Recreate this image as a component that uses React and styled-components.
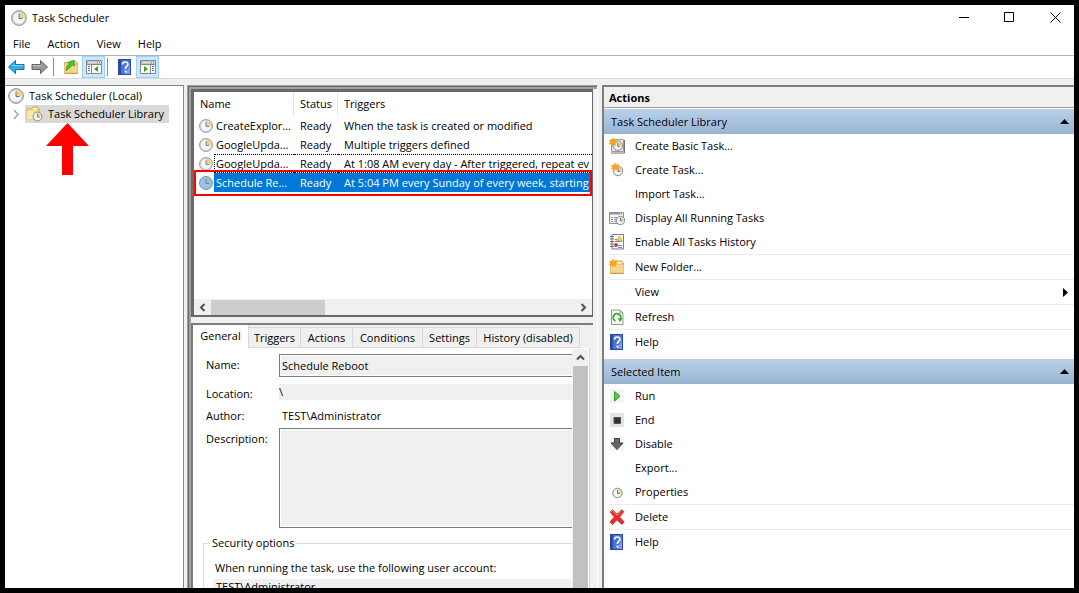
import React from 'react';
import styled, { createGlobalStyle, css } from 'styled-components';

const GlobalStyle = createGlobalStyle`
  *, *::before, *::after {
    box-sizing: border-box;
  }

  body {
    margin: 0;
    background: #000;
    color: #000;
    font: 11px/16px "Open Sans", "Noto Sans", sans-serif;
  }

  button, input, textarea {
    margin: 0;
    padding: 0;
    border: 0;
    border-radius: 0;
    background: none;
    color: inherit;
    font: inherit;
    text-align: left;
  }
`;

const Window = styled.div`
  display: flex;
  flex-direction: column;
  height: 100vh;
  border: 5px solid #000;
  background: #fff;
  overflow: hidden;
`;

const TitleBar = styled.header`
  display: flex;
  align-items: center;
  flex: 0 0 auto;
  height: 25px;
  padding-left: 6px;
`;

const Title = styled.h1`
  flex: 1;
  margin: 0 0 0 5px;
  font-size: 11px;
  font-weight: normal;
`;

const WindowButton = styled.button`
  display: flex;
  align-items: center;
  justify-content: center;
  width: 45px;
  height: 25px;

  &:last-child {
    width: 42px;
    padding-left: 4px;
  }
`;

const MenuBar = styled.nav`
  display: flex;
  flex: 0 0 auto;
  gap: 17px;
  height: 26px;
  padding: 2px 8px 0;
  border-bottom: 1px solid #b4b4b4;
`;

const ToolBar = styled.div`
  display: flex;
  align-items: center;
  flex: 0 0 auto;
  height: 23px;
  border-bottom: 1px solid #dadada;
`;

const ToolButton = styled.button`
  display: flex;
  align-items: center;
  justify-content: center;
  width: 23px;
  height: 22px;
  border: 1px solid ${props => props.$pressed ? '#99d1ff' : 'transparent'};
  background-color: ${props => props.$pressed ? '#cce8ff' : 'transparent'};
`;

const ToolSeparator = styled.span`
  width: 1px;
  height: 18px;
  margin: 0 5px 0 2px;
  background-color: #8c8c8c;
`;

const Body = styled.main`
  display: grid;
  grid-template-columns: 182px minmax(0, 411fr) minmax(0, 476fr);
  flex: 1;
  min-height: 0;
  padding-top: 6px;
  background-color: #f0f0f0;
`;

const TreePane = styled.aside`
  position: relative;
  margin-right: 3px;
  border-top: 1px solid #828790;
  border-right: 1px solid #828790;
  background-color: #fff;
`;

const TreeRow = styled.div`
  display: flex;
  align-items: center;
  height: 18px;
  padding-left: ${props => props.$child ? '6px' : '3px'};

  &:first-child {
    margin-top: 1px;
  }
`;

const TreeLabel = styled.button`
  display: flex;
  align-items: center;
  gap: 5px;
  height: 18px;
  margin-left: ${props => props.$selected ? '5px' : '0'};
  padding: 0 5px 0 ${props => props.$selected ? '1px' : '0'};
  background-color: ${props => props.$selected ? '#d9d9d9' : 'transparent'};
  white-space: nowrap;
`;

const ArrowMark = styled.svg`
  position: absolute;
  top: 37px;
  left: 41px;
`;

const MiddlePane = styled.section`
  display: flex;
  flex-direction: column;
  min-width: 0;
  min-height: 0;
  padding: 3px 4px 0 3px;
  border: solid #a0a0a0;
  border-width: 1px 0 0 1px;
  border-right: 1px solid #fff;
  box-shadow: inset 1px 1px #696969, inset 3px 3px #a0a0a0;
`;

const ListPane = styled.div`
  position: relative;
  display: flex;
  flex-direction: column;
  flex: 0 0 228px;
  border: solid #696969;
  border-width: 3px 1px 2px 3px;
  background-color: #fff;
  overflow: hidden;
`;

const TaskTable = styled.table`
  width: 100%;
  border-collapse: separate;
  border-spacing: 0;
  table-layout: fixed;
`;

const HeadCell = styled.th`
  height: 24px;
  padding: 0 0 0 6px;
  border-right: ${props => props.$divided ? '1px solid #e5e5e5' : '0'};
  font-weight: normal;
  text-align: left;
`;

const TaskRow = styled.tr`
  height: 19px;
`;

const Cell = styled.td`
  height: 19px;
  padding: 1px 0 0 6px;
  white-space: nowrap;
  overflow: hidden;
  ${props => props.$focused && css`
    border-top: 1px dotted #000;
    border-bottom: 1px dotted #000;
  `}
  ${props => props.$selected && css`
    background-color: #0078d7;
    color: #fff;
  `}
`;

const IconCell = styled.td`
  padding: 0 0 0 5px;

  svg {
    display: block;
  }
`;

const NameCell = styled(Cell)`
  padding-left: ${props => props.$focused ? '1px' : '2px'};
  border-left: ${props => props.$focused ? '1px dotted #000' : '0'};
`;

const RedBox = styled.div`
  position: absolute;
  top: 78px;
  left: 0;
  right: 0;
  height: 26px;
  border: 2px solid #f00;
`;

const HorizontalBar = styled.div`
  display: grid;
  grid-template-columns: 17px 114px 1fr 17px;
  align-items: center;
  height: 16px;
  margin-top: auto;
  background-color: #f0f0f0;
`;

const HorizontalThumb = styled.span`
  height: 15px;
  background-color: #cdcdcd;
`;

const ScrollButton = styled.button`
  display: flex;
  align-items: center;
  justify-content: center;
  height: 16px;
`;

const DetailPane = styled.div`
  display: flex;
  flex-direction: column;
  flex: 1;
  min-height: 0;
  margin-top: 6px;
  border: solid #7d7d7d;
  border-width: 2px 0 0 2px;
  overflow: hidden;
`;

const Tabs = styled.div`
  display: flex;
  align-items: flex-end;
  flex: 0 0 23px;
`;

const Tab = styled.button`
  flex: 0 0 auto;
  width: ${props => props.$width};
  height: ${props => props.$active ? '23px' : '21px'};
  padding-bottom: ${props => props.$active ? '1px' : '0'};
  border: 1px solid #d9d9d9;
  border-width: ${props => props.$active ? '0 1px 0 0' : '1px 1px 1px 0'};
  background-color: ${props => props.$active ? '#fff' : '#f0f0f0'};
  text-align: center;
  white-space: nowrap;
`;

const TabPage = styled.div`
  display: flex;
  flex: 1;
  min-height: 0;
  margin-right: 3px;
  padding-right: 1px;
  border-right: 1px solid #d9d9d9;
  background-color: #fff;
`;

const Form = styled.form`
  flex: 1;
  min-width: 0;
  padding: 6px 0 0 10px;
  overflow: hidden;
`;

const FormRow = styled.div`
  display: grid;
  grid-template-columns: 76px minmax(0, 1fr);
  min-height: ${props => props.$height};

  label {
    padding: ${props => props.$labelTop || '0'} 0 0 3px;
  }
`;

const TextBox = styled.input`
  width: 100%;
  height: 23px;
  padding: 0 2px 1px;
  border: 1px solid #7a7a7a;
  border-right: 0;
  background-color: #f0f0f0;
  box-shadow: inset 1px 1px #fff, inset 0 -1px #fff;
`;

const PlainBox = styled.input`
  width: 100%;
  height: 16px;
  padding-left: ${props => props.$inset ? '3px' : '0'};
  background-color: ${props => props.$white ? '#fff' : '#f0f0f0'};
`;

const TextArea = styled.textarea`
  display: block;
  width: 100%;
  height: 100px;
  border: 1px solid #7a7a7a;
  border-right: 0;
  background-color: #f0f0f0;
  box-shadow: inset 1px 1px #fff, inset 0 -1px #fff;
  resize: none;
`;

const SecurityGroup = styled.fieldset`
  min-width: 0;
  margin: 7px 0 0;
  padding: 9px 0 0 9px;
  border: 1px solid #dcdcdc;
  border-right: 0;

  legend {
    padding: 0 2px;
    margin-left: -3px;
  }

  label {
    display: block;
    padding: 0 0 3px 2px;
    white-space: nowrap;
  }
`;

const VerticalBar = styled.div`
  display: flex;
  flex-direction: column;
  flex: 0 0 16px;
  margin-top: 1px;
  background-color: #f0f0f0;
`;

const VerticalThumb = styled.span`
  flex: 1;
  margin: 1px 0 0 1px;
  background-color: #c1c1c1;
`;

const ActionsPane = styled.aside`
  min-width: 0;
  margin-left: 4px;
  border: solid #7d7d7d;
  border-width: 2px 0 0 2px;
  background-color: #fff;
  overflow: hidden;
`;

const ActionsTitle = styled.h2`
  height: 21px;
  margin: 0 0 1px;
  padding: 3px 5px 0;
  border-bottom: 1px solid #a0a0a0;
  background-color: #f0f0f0;
  font-size: 11px;
  font-weight: bold;
`;

const GroupHeader = styled.button`
  display: flex;
  align-items: center;
  justify-content: space-between;
  width: 100%;
  height: 25px;
  margin-top: ${props => props.$first ? '0' : '5px'};
  padding: 0 5px 0 7px;
  background: linear-gradient(#b9d1ea, #99b4d1);
`;

const ActionList = styled.ul`
  margin: 0;
  padding: 0 0 0 5px;
  list-style: none;
`;

const ActionItem = styled.li`
  border-top: ${props => props.$divided ? '1px solid #ececec' : '0'};
`;

const ActionButton = styled.button`
  display: grid;
  grid-template-columns: 16px 1fr 10px;
  align-items: center;
  gap: 10px;
  width: 100%;
  height: 24px;
  padding-right: 1px;

  span {
    grid-column: 2;
  }
`;

const ClockFace = ({ cx, cy, r, tint }) => (
  <g>
    <circle cx={cx} cy={cy} r={r} fill={tint || '#d3d6d9'} stroke={tint ? '#4d7ea8' : '#868b90'} strokeWidth=".9" />
    <circle cx={cx} cy={cy} r={r * 0.76} fill={tint || '#f4f6f7'} />
    <path d={`M${cx} ${cy}V${cy - r * 0.76}A${r * 0.76} ${r * 0.76} 0 0 1 ${cx + r * 0.76} ${cy}Z`} fill={tint ? '#a5c3b4' : '#f6cf78'} />
    <path d={`M${cx} ${cy - r * 0.6}V${cy + 0.5}H${cx + r * 0.5}`} fill="none" stroke="#5f7894" strokeWidth="1" />
  </g>
);

const ClockIcon = ({ size = 16, tint }) => (
  <svg width={size} height={size} viewBox="0 0 16 16">
    <ClockFace cx={8} cy={8} r={7.4} tint={tint} />
  </svg>
);

const SmallClockIcon = () => (
  <svg width="16" height="16" viewBox="0 0 16 16">
    <ClockFace cx={8.5} cy={9} r={4.8} />
  </svg>
);

const Spark = ({ x = 0, y = 0 }) => (
  <path
    transform={`translate(${x} ${y})`}
    d="M4 0l1 2.300L7.500 1 6.400 3.400 8 4.500 6 5.200l.7 2.300L4.300 6.300 3 8l-.5-2.300L0 6l1.500-2L0 2.200l2.800.1z"
    fill="#f9a11b"
    stroke="#f9a11b"
    strokeWidth=".6"
  />
);

const CreateTaskIcon = () => (
  <svg width="16" height="16" viewBox="0 0 16 16">
    <ClockFace cx={9} cy={9} r={4.8} />
    <Spark x={2} y={1} />
  </svg>
);

const BasicTaskIcon = () => (
  <svg width="16" height="16" viewBox="0 0 16 16">
    <path d="M2.500 1.500h12v12h-12z" fill="#ebe8e5" stroke="#a39b96" />
    <path d="M2 15h13.500V2" fill="none" stroke="#7a716d" />
    <ClockFace cx={8.8} cy={7.8} r={4.8} />
    <Spark />
  </svg>
);

const FolderShape = () => (
  <g>
    <path d="M1.500 3.500h5l1-1.500h5.500v2h1.500v10.500h-13z" fill="#ecc56c" stroke="#cfa146" strokeWidth=".8" />
    <path d="M8 3h4.500v1.500H8z" fill="#fff" />
    <path d="M1.500 6h13v8.500h-13z" fill="#f5d688" />
    <path d="M1.500 14.300h13" stroke="#c4963a" />
  </g>
);

const NewFolderIcon = () => (
  <svg width="16" height="16" viewBox="0 0 16 16">
    <FolderShape />
    <Spark />
  </svg>
);

const FolderUpIcon = () => (
  <svg width="16" height="16" viewBox="0 0 16 16">
    <FolderShape />
    <path d="M3 11.500c0-3.500 1.500-5.500 3.500-6.500L5 3.500l6-2.300.5 5.800L9.800 6C8 7.500 7 9 3 11.500z" fill="#4cc331" stroke="#279316" strokeWidth=".7" />
  </svg>
);

const LibraryIcon = () => (
  <svg width="17" height="16" viewBox="0 0 17 16">
    <path d="M1 2.500h5l1-1.500h5v2h1.500v10.500H1z" fill="#f5d684" stroke="#d2a850" strokeWidth=".8" />
    <path d="M7 2h4v1.500H7z" fill="#fff" />
    <path d="M1 5h7l1 8.500H1z" fill="#fbe8af" />
    <ClockFace cx={11.5} cy={10.5} r={4.5} />
  </svg>
);

const HelpIcon = () => (
  <svg width="16" height="16" viewBox="0 0 16 16">
    <path d="M1 0h13v16H1z" fill="#2b4aa8" />
    <path d="M4 1h9v14H4z" fill="#4a74dc" />
    <path d="M8 15h5V6z" fill="#7c9cf0" />
    <path d="M5.500 5.500C5.700 3.500 6.700 3 8.200 3c3.300 0 3.300 3 1.600 4.300-1 .8-1.400 1.200-1.400 2.700" fill="none" stroke="#fff" strokeWidth="1.7" />
    <path d="M7.500 11.500h2v2h-2z" fill="#fff" />
  </svg>
);

const ArrowIcon = ({ forward }) => (
  <svg width="17" height="16" viewBox="0 0 17 16">
    <path
      d="M.5 8l7-6.500v4h8.500v5H7.500v4z"
      transform={forward ? 'rotate(180 8.5 8)' : undefined}
      fill={forward ? '#999' : '#35aef0'}
      stroke={forward ? '#636363' : '#176fa8'}
      strokeLinejoin="round"
    />
    <path d={forward ? 'M2 6.500h8' : 'M4.500 6.500H15'} stroke={forward ? '#c4c4c4' : '#8ddcff'} />
  </svg>
);

const PaneIcon = ({ right }) => (
  <svg width="16" height="16" viewBox="0 0 16 16">
    <path d="M.5 1.500h15v13H.5z" fill="#fff" stroke="#85888c" />
    <path d="M1 3.500h14" stroke="#85888c" strokeWidth="2" />
    <path d="M2 3.500h9" stroke="#dfe3e8" />
    <path d="M12 3.500h3" stroke="#fff" strokeDasharray="1 1" />
    <path d={right ? 'M10.500 6v8M1 5.500h14' : 'M5.500 6v8M1 5.500h14'} stroke="#85888c" />
    <path d={right ? 'M12 7.500h2M12 9.500h2M12 11.500h2' : 'M2 7.500h2M2 9.500h2M2 11.500h2'} stroke="#4b78b8" />
    <path d={right ? 'M4 7l4 3-4 3z' : 'M12 7l-4 3 4 3z'} fill="#35a51f" />
  </svg>
);

const RunningIcon = () => (
  <svg width="16" height="16" viewBox="0 0 16 16">
    <path d="M.5 2.500h14v11H.5z" fill="#f5f6f8" stroke="#8a8d94" />
    <path d="M1 3.500h13" stroke="#8f96a3" strokeWidth="2" />
    <path d="M2 7.500h2m1 0h3M2 9.500h2m1 0h3M2 11.500h2m1 0h3" stroke="#85909f" />
    <path d="M11 3.500h3" stroke="#fff" strokeDasharray="1 1" />
    <ClockFace cx={11.5} cy={10.5} r={4.2} />
  </svg>
);

const HistoryIcon = () => (
  <svg width="16" height="16" viewBox="0 0 16 16">
    <path d="M3 .5h11.500v14.500H3z" fill="#f8f8fb" stroke="#777e8e" />
    <path d="M1 2.500h4M1 5h4M1 7.500h4M1 10h4M1 12.500h4" stroke="#6c7482" />
    <path d="M6 5.500h2m-2 2h7M9 11.500h4m-4 2h4" stroke="#7289b7" />
    <path d="M10.500 2l3 4.500h-6z" fill="#f7cf25" stroke="#c99e12" strokeWidth=".5" />
    <circle cx="7" cy="11" r="2" fill="#d93a2b" />
  </svg>
);

const RefreshIcon = () => (
  <svg width="16" height="16" viewBox="0 0 16 16">
    <path d="M2.500 1h8.500l3 3v11.500H2.500z" fill="#fafafa" stroke="#969696" />
    <path d="M11 1v3h3" fill="none" stroke="#969696" />
    <path d="M6.500 12A3.800 3.800 0 1 1 11.500 10" fill="none" stroke="#3aae2f" strokeWidth="1.9" />
    <path d="M8.500 9.200h5.200L11 13z" fill="#3aae2f" />
  </svg>
);

const RunIcon = () => (
  <svg width="16" height="16" viewBox="0 0 16 16">
    <path d="M1 1h14v14H1z" fill="#f4f4f4" />
    <path d="M5.500 3.500v9.500l5.500-4.700z" fill="#5bd03d" stroke="#2a9d1b" />
  </svg>
);

const EndIcon = () => (
  <svg width="16" height="16" viewBox="0 0 16 16">
    <path d="M1 1h14v14H1z" fill="#e2e2e2" />
    <path d="M5 5.500h6.500v6H5z" fill="#333" stroke="#555" />
  </svg>
);

const DisableIcon = () => (
  <svg width="16" height="16" viewBox="0 0 16 16">
    <path d="M1 1h14v14H1z" fill="#f4f4f4" />
    <path d="M5.500 2.500h5V7H14l-6 6.500L2 7h3.500z" fill="#666" stroke="#3d3d3d" strokeLinejoin="round" />
  </svg>
);

const DeleteIcon = () => (
  <svg width="16" height="16" viewBox="0 0 16 16">
    <path d="M1 3l2.500-2.300L8 5l4.500-4.300L15 2.500 10.700 8l4.600 5-2.500 2.500L8 11l-4.500 4.500L.8 13l4.400-5z" fill="#e5302a" stroke="#b91d1b" strokeWidth=".6" />
    <path d="M2 3l1.500-1.300L8 6l4.500-4.300" fill="none" stroke="#f38d86" />
  </svg>
);

const Chevron = ({ d, color = '#505050', width = 2 }) => (
  <svg width="9" height="9" viewBox="0 0 9 9">
    <path d={d} fill="none" stroke={color} strokeWidth={width} />
  </svg>
);

const CollapseMark = () => (
  <svg width="9" height="5" viewBox="0 0 9 5"><path d="M0 5l4.500-5L9 5z" /></svg>
);

const tasks = [
  { name: 'CreateExplor...', trigger: 'When the task is created or modified' },
  { name: 'GoogleUpda...', trigger: 'Multiple triggers defined' },
  { name: 'GoogleUpda...', trigger: 'At 1:08 AM every day - After triggered, repeat ev', focused: true },
  { name: 'Schedule Re...', trigger: 'At 5:04 PM every Sunday of every week, starting', selected: true },
];

const tabs = [
  ['General', '56px'],
  ['Triggers', '52px'],
  ['Actions', '52px'],
  ['Conditions', '70px'],
  ['Settings', '54px'],
  ['History (disabled)', '103px'],
];

const libraryActions = [
  { label: 'Create Basic Task...', icon: <BasicTaskIcon /> },
  { label: 'Create Task...', icon: <CreateTaskIcon /> },
  { label: 'Import Task...' },
  { label: 'Display All Running Tasks', icon: <RunningIcon /> },
  { label: 'Enable All Tasks History', icon: <HistoryIcon /> },
  { label: 'New Folder...', icon: <NewFolderIcon />, divided: true },
  { label: 'View', submenu: true, divided: true },
  { label: 'Refresh', icon: <RefreshIcon />, divided: true },
  { label: 'Help', icon: <HelpIcon />, divided: true },
];

const itemActions = [
  { label: 'Run', icon: <RunIcon /> },
  { label: 'End', icon: <EndIcon /> },
  { label: 'Disable', icon: <DisableIcon /> },
  { label: 'Export...' },
  { label: 'Properties', icon: <SmallClockIcon /> },
  { label: 'Delete', icon: <DeleteIcon />, divided: true },
  { label: 'Help', icon: <HelpIcon />, divided: true },
];

const ActionGroup = ({ title, items, first }) => (
  <section>
    <GroupHeader type="button" $first={first}>{title}<CollapseMark /></GroupHeader>
    <ActionList>
      {items.map(item => (
        <ActionItem key={item.label} $divided={item.divided}>
          <ActionButton type="button">
            {item.icon}
            <span>{item.label}</span>
            {item.submenu && <svg width="6" height="9" viewBox="0 0 6 9"><path d="M0 0l5 4.500L0 9z" /></svg>}
          </ActionButton>
        </ActionItem>
      ))}
    </ActionList>
  </section>
);

const TaskList = () => (
  <ListPane>
    <TaskTable>
      <colgroup>
        <col width="20" />
        <col width="80" />
        <col width="44" />
        <col />
      </colgroup>
      <thead>
        <tr>
          <HeadCell colSpan={2} $divided>Name</HeadCell>
          <HeadCell $divided>Status</HeadCell>
          <HeadCell>Triggers</HeadCell>
        </tr>
      </thead>
      <tbody>
        {tasks.map((task, i) => (
          <TaskRow key={i}>
            <IconCell><ClockIcon size={14} tint={task.selected && '#9cc3e4'} /></IconCell>
            <NameCell $focused={task.focused} $selected={task.selected}>{task.name}</NameCell>
            <Cell $focused={task.focused} $selected={task.selected}>Ready</Cell>
            <Cell $focused={task.focused} $selected={task.selected}>{task.trigger}</Cell>
          </TaskRow>
        ))}
      </tbody>
    </TaskTable>
    <RedBox />
    <HorizontalBar>
      <ScrollButton type="button" aria-label="Scroll left"><Chevron d="M6.500 1L3 4.500 6.500 8" /></ScrollButton>
      <HorizontalThumb />
      <span />
      <ScrollButton type="button" aria-label="Scroll right"><Chevron d="M2.500 1L6 4.500 2.500 8" /></ScrollButton>
    </HorizontalBar>
  </ListPane>
);

const TaskDetails = () => (
  <DetailPane>
    <Tabs role="tablist">
      {tabs.map(([label, width], i) => (
        <Tab key={label} type="button" role="tab" aria-selected={i === 0} $active={i === 0} $width={width}>{label}</Tab>
      ))}
    </Tabs>
    <TabPage>
      <Form>
        <FormRow $height="30px" $labelTop="3px">
          <label htmlFor="name">Name:</label>
          <TextBox id="name" readOnly defaultValue="Schedule Reboot" />
        </FormRow>
        <FormRow $height="24px" $labelTop="2px">
          <label htmlFor="location">Location:</label>
          <PlainBox id="location" readOnly defaultValue="\" />
        </FormRow>
        <FormRow $height="20px">
          <label htmlFor="author">Author:</label>
          <PlainBox id="author" readOnly $white $inset defaultValue="TEST\Administrator" />
        </FormRow>
        <FormRow $height="100px" $labelTop="3px">
          <label htmlFor="description">Description:</label>
          <TextArea id="description" readOnly />
        </FormRow>
        <SecurityGroup>
          <legend>Security options</legend>
          <label htmlFor="account">When running the task, use the following user account:</label>
          <PlainBox id="account" readOnly $inset defaultValue="TEST\Administrator" />
        </SecurityGroup>
      </Form>
      <VerticalBar>
        <ScrollButton type="button" aria-label="Scroll up"><Chevron d="M1 6.500L4.500 3 8 6.500" /></ScrollButton>
        <VerticalThumb />
      </VerticalBar>
    </TabPage>
  </DetailPane>
);

const App = () => (
  <>
    <GlobalStyle />
    <Window>
      <TitleBar>
        <ClockIcon />
        <Title>Task Scheduler</Title>
        <WindowButton type="button" aria-label="Minimize">
          <svg width="11" height="11"><path d="M0 5.500h10" stroke="#000" /></svg>
        </WindowButton>
        <WindowButton type="button" aria-label="Maximize">
          <svg width="11" height="11"><path d="M.5.5h9v9h-9z" fill="none" stroke="#000" /></svg>
        </WindowButton>
        <WindowButton type="button" aria-label="Close">
          <svg width="11" height="11"><path d="M.5.5l10 10M10.500.5l-10 10" stroke="#000" /></svg>
        </WindowButton>
      </TitleBar>
      <MenuBar>
        {['File', 'Action', 'View', 'Help'].map(label => (
          <button key={label} type="button">{label}</button>
        ))}
      </MenuBar>
      <ToolBar>
        <ToolButton type="button" aria-label="Back"><ArrowIcon /></ToolButton>
        <ToolButton type="button" aria-label="Forward"><ArrowIcon forward /></ToolButton>
        <ToolSeparator />
        <ToolButton type="button" aria-label="Up one level"><FolderUpIcon /></ToolButton>
        <ToolButton type="button" aria-label="Show console tree" $pressed><PaneIcon /></ToolButton>
        <ToolSeparator />
        <ToolButton type="button" aria-label="Help"><HelpIcon /></ToolButton>
        <ToolButton type="button" aria-label="Show action pane" $pressed><PaneIcon right /></ToolButton>
      </ToolBar>
      <Body>
        <TreePane>
          <TreeRow>
            <TreeLabel type="button"><ClockIcon />Task Scheduler (Local)</TreeLabel>
          </TreeRow>
          <TreeRow $child>
            <Chevron d="M3 0l4 4.500L3 9" color="#a6a6a6" width={1.5} />
            <TreeLabel type="button" $selected><LibraryIcon />Task Scheduler Library</TreeLabel>
          </TreeRow>
          <ArrowMark width="43" height="52" viewBox="0 0 43 52">
            <path d="M21.500 0L43 23H27v29H16V23H0z" fill="#f00" />
          </ArrowMark>
        </TreePane>
        <MiddlePane>
          <TaskList />
          <TaskDetails />
        </MiddlePane>
        <ActionsPane>
          <ActionsTitle>Actions</ActionsTitle>
          <ActionGroup title="Task Scheduler Library" items={libraryActions} first />
          <ActionGroup title="Selected Item" items={itemActions} />
        </ActionsPane>
      </Body>
    </Window>
  </>
);

export default App;
